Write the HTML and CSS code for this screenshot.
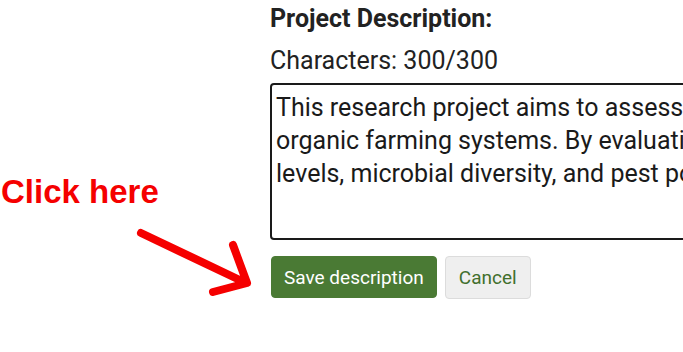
FILE: index.html
```html
<!DOCTYPE html>
<html>
<head>
<meta charset="utf-8">
<link rel="stylesheet" href="styles.css">
</head>
<body>
<div class="page">
  <div class="form">
    <div class="label">Project Description:</div>
    <div class="count">Characters: 300/300</div>
    <textarea class="desc" wrap="off">This research project aims to assess the impact of
organic farming systems. By evaluating soil nutrient
levels, microbial diversity, and pest populations,</textarea>
    <div class="actions">
      <button class="btn btn-save">Save description</button>
      <button class="btn btn-cancel">Cancel</button>
    </div>
  </div>
  <div class="hint">Click here</div>
  <svg class="arrow" width="683" height="352" viewBox="0 0 683 352">
    <path d="M141 233 L246 283 M233 245 L247 283 L213 292" fill="none" stroke="#f50000" stroke-width="8" stroke-linecap="round" stroke-linejoin="round"/>
  </svg>
</div>
</body>
</html>
```
FILE: styles.css
```css
html, body {
  margin: 0;
  padding: 0;
  background: #fff;
  overflow: hidden;
}
.page {
  position: relative;
  width: 683px;
  height: 352px;
  overflow: hidden;
  font-family: Roboto, "Liberation Sans", sans-serif;
}
.form {
  display: flex;
  flex-direction: column;
  align-items: flex-start;
  padding: 4px 0 0 270px;
  width: 700px;
}
.label {
  font-size: 25px;
  font-weight: bold;
  line-height: 30px;
  color: #222;
}
.count {
  font-size: 25px;
  line-height: 30px;
  margin-top: 12px;
  color: #222;
}
.desc {
  box-sizing: border-box;
  margin-top: 7px;
  width: 700px;
  height: 157px;
  border: 2px solid #1a1a1a;
  border-radius: 4px;
  padding: 6px 4px 0;
  font-family: Roboto, "Liberation Sans", sans-serif;
  font-size: 25px;
  line-height: 33px;
  color: #1a1a1a;
  resize: none;
  overflow: hidden;
  background: #fff;
}
.actions {
  display: flex;
  gap: 8px;
  margin-top: 16px;
  margin-left: 1px;
}
.btn {
  font-family: Roboto, "Liberation Sans", sans-serif;
  font-size: 19px;
  height: 42px;
  border-radius: 4px;
  padding: 0 13px;
  cursor: pointer;
}
.btn-save {
  background: #4a7a34;
  color: #fff;
  border: 1px solid #4a7a34;
  padding: 0 12px;
}
.btn-cancel {
  background: #efefef;
  color: #41702d;
  border: 1px solid #dcdcdc;
  height: 43px;
}
.hint {
  position: absolute;
  left: 1px;
  top: 173px;
  font-family: "Liberation Sans", Arial, sans-serif;
  font-weight: bold;
  font-size: 33px;
  color: #f50000;
}
.arrow {
  position: absolute;
  left: 0;
  top: 0;
  pointer-events: none;
}
```
